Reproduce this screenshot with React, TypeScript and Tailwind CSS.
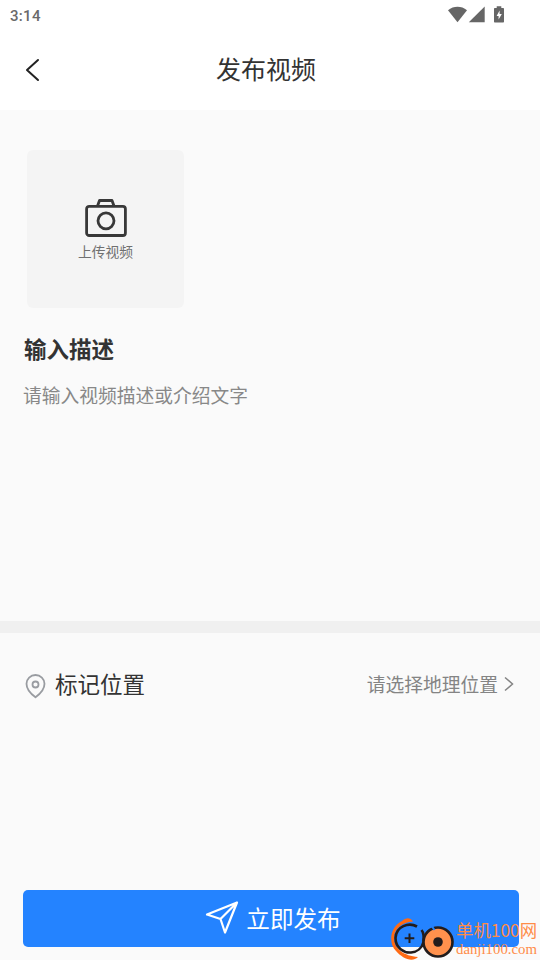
function StatusBar() {
  return (
    <div className="flex h-[30px] items-center justify-between pl-[10px] pr-[34px] text-[#6a6a6a]">
      <span className="mt-[2px] font-[Roboto] text-[15px] font-medium leading-[18px] tracking-[0.3px]">
        3:14
      </span>
      <svg width="60" height="18" viewBox="446 6 60 18" fill="#666666">
        <path d="M448 10.2C453.6 5.7 461.4 5.7 467 10.2L457.5 22.3Z" />
        <path d="M484.7 6.5V22.3H468.8Z" />
        <path d="M496.7 6.3h4.6v1.6h1.7c.6 0 1 .4 1 1v12.6c0 .6-.4 1-1 1h-8c-.6 0-1-.4-1-1V8.9c0-.6.4-1 1-1h1.7z" />
        <path d="M499.6 10.5l-3 5.6h2v3.4l3.2-5.4h-2.2z" fill="#fff" />
      </svg>
    </div>
  );
}

function Header() {
  return (
    <header className="grid h-20 grid-cols-[60px_1fr_68px] items-center">
      <button type="button" aria-label="返回" className="pl-[24px]">
        <svg width="16" height="26" viewBox="0 0 16 26" fill="none" stroke="#222" strokeWidth="2" strokeLinecap="round" strokeLinejoin="round">
          <path d="M14 3L3 13L14 23" />
        </svg>
      </button>
      <h1 className="-mt-1 text-center text-[25px] leading-[36px] text-[#333]">发布视频</h1>
    </header>
  );
}

function Upload() {
  return (
    <button
      type="button"
      className="ml-[4px] flex h-[158px] w-[157px] flex-col items-center rounded-[6px] bg-[#f4f4f4] pt-[48px]"
    >
      <svg width="44" height="40" viewBox="0 0 44 40" fill="none" stroke="#383838" strokeWidth="2.8" strokeLinejoin="round">
        <rect x="2.6" y="8.3" width="38.8" height="29.2" rx="2.6" />
        <path d="M13.5 8L15.5 2.5H28L30 8" />
        <circle cx="22" cy="22.8" r="8" />
      </svg>
      <span className="mt-[3px] text-[13.75px] leading-[20px] text-[#707070]">上传视频</span>
    </button>
  );
}

function Watermark() {
  return (
    <div className="pointer-events-none absolute bottom-0 right-0 flex h-[46px] w-[150px] text-[#ff8c48]">
      <svg className="shrink-0" width="66" height="46" viewBox="390 914 66 46" fill="none">
        <path d="M413 921.5C410 917 406 917.5 402 921C390 927 388 943 396 951C402 958 412 963 418 957C404 956 393.5 949 394 937C394.5 929 402 922 413 921.5Z" fill="#ff6a13" />
        <path d="M417 926.5C409 922 396 926 395.5 938C395.5 948 404 953 411 952.5C417 952 422 948 423.5 942C424 937 424 933 421.5 930" stroke="#221c1c" strokeWidth="2.6" />
        <path d="M409.5 933.5V943M404.7 938.2H414.3" stroke="#221c1c" strokeWidth="2" />
        <path d="M425.5 937C426.5 933.5 428.5 931 431 929.5" stroke="#221c1c" strokeWidth="2.6" />
        <circle cx="438" cy="942" r="14.5" fill="#ff914d" stroke="#221c1c" strokeWidth="2.6" />
        <path d="M432 926.5L434.5 930" stroke="#2483ff" strokeWidth="2" />
        <circle cx="438" cy="942" r="4.8" fill="#221c1c" />
      </svg>
      <div className="flex flex-col whitespace-nowrap">
        <span className="mt-[4px] text-[17.4px] leading-[24px]">单机100网</span>
        <span className="font-['Liberation_Serif',serif] text-[14.8px] leading-[15px]">danji100.com</span>
      </div>
    </div>
  );
}

export default function App() {
  return (
    <div className="relative flex h-[960px] w-[540px] flex-col overflow-hidden bg-[#fafafa] font-['Noto_Sans_CJK_SC',sans-serif]">
      <div className="bg-white">
        <StatusBar />
        <Header />
      </div>

      <main className="flex flex-1 flex-col">
        <section className="h-[511px] px-[23px] pt-[40px]">
          <Upload />
          <h2 className="mt-[24px] pl-px text-[22.5px] font-bold leading-[32px] text-[#333]">输入描述</h2>
          <p className="mt-[18px] text-[18.75px] leading-[26px] text-[#888]">
            请输入视频描述或介绍文字
          </p>
        </section>

        <div className="h-3 bg-[#f0f0f0]" />

        <section className="flex items-center justify-between pl-[25px] pr-[26px] pt-[34px]">
          <div className="flex items-center">
            <svg className="mt-[5px]" width="22" height="26" viewBox="0 0 22 26" fill="none" stroke="#999ca1" strokeWidth="1.8" strokeLinejoin="round">
              <path d="M10.5 24.3C8 22.5 1.5 17.5 1.5 10.8C1.5 5.8 5.5 2 10.5 2C15.5 2 19.5 5.8 19.5 10.8C19.5 17.5 13 22.5 10.5 24.3Z" />
              <circle cx="10.5" cy="11.5" r="3" />
            </svg>
            <span className="ml-[8px] text-[22.5px] leading-[32px] text-[#333]">标记位置</span>
          </div>
          <div className="mt-[2px] flex items-center text-[#848484]">
            <span className="text-[18.75px] leading-[26px]">请选择地理位置</span>
            <svg className="ml-[6px]" width="10" height="16" viewBox="0 0 10 16" fill="none" stroke="currentColor" strokeWidth="1.5">
              <path d="M1 1.5L8.5 8L1 14.5" />
            </svg>
          </div>
        </section>
      </main>

      <footer className="px-[21px] pb-[13px] pl-[23px]">
        <button
          type="button"
          className="flex h-[57px] w-full items-center justify-center rounded-[5px] bg-[#2483ff] pb-[2px] pl-[4px] text-white"
        >
          <svg className="-mt-[2px]" width="34" height="34" viewBox="205 900 34 34" fill="none" stroke="white" strokeWidth="2.2" strokeLinejoin="round" strokeLinecap="round">
            <path d="M237 902.5L207 914.5L220.5 919L225 932.5ZM220.5 919L237 902.5" />
          </svg>
          <span className="ml-[7px] text-[23.6px] leading-[34px]">立即发布</span>
        </button>
      </footer>

      <Watermark />
    </div>
  );
}
